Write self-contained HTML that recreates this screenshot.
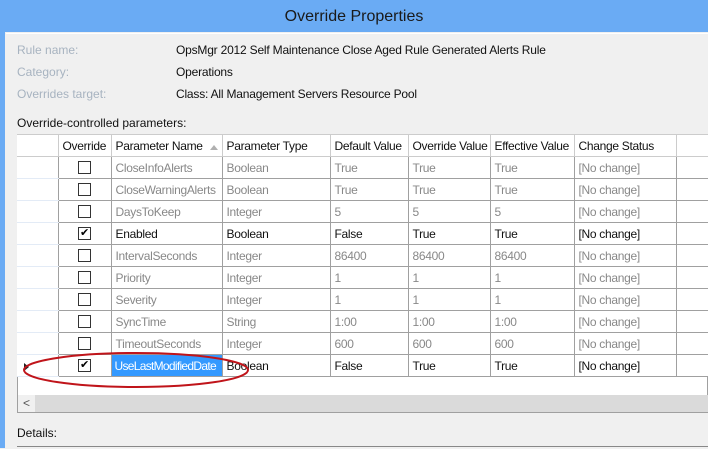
<!DOCTYPE html>
<html><head><style>
body{margin:0;width:708px;height:448px;overflow:hidden;background:#f0f0f0;font-family:"Liberation Sans",sans-serif;font-size:12px;position:relative}
.a{position:absolute}
.title{left:0;top:0;width:708px;height:32px;background:#6aabf4;color:#1a1a1a;font-size:16px;text-align:center;line-height:34px}
.lb{left:0;top:32px;width:5px;height:416px;background:#6aabf4}
.lab{color:#a7b3c0;left:17px}
.val{left:176px;color:#111;letter-spacing:-0.2px}
table{position:absolute;left:17px;top:134px;width:691px;border-collapse:collapse;table-layout:fixed;background:#fff}
td{height:21px;border:1px solid #a0a0a0;padding:0 0 0 4px;white-space:nowrap;overflow:hidden;color:#888;font-size:12px;letter-spacing:-0.3px}
tr.h td{background:#fff;color:#111;border-color:#ccc}
td.rh{border-right:1px solid #a0a0a0;border-top:1px solid #e3ebf6;border-bottom:1px solid #e3ebf6;border-left:none}
tr.k td{color:#111}
.cb{width:11px;height:11px;border:1px solid #333;margin:0 auto;background:#fff;position:relative;font-size:11px;line-height:11px;text-align:center;color:#000}
td.c{padding:0}
.sel{background:#3399ff;color:#fff!important;letter-spacing:-0.7px!important;padding-left:3px}
</style></head><body>
<div class="a title">Override Properties</div>
<div class="a lb"></div>
<div class="a" style="left:6px;top:33px;width:702px;height:1px;background:#fff"></div>
<div class="a lab" style="top:43px">Rule name:</div><div class="a val" style="top:43px">OpsMgr 2012 Self Maintenance Close Aged Rule Generated Alerts Rule</div>
<div class="a lab" style="top:65px">Category:</div><div class="a val" style="top:65px">Operations</div>
<div class="a lab" style="top:87px">Overrides target:</div><div class="a val" style="top:87px">Class: All Management Servers Resource Pool</div>
<div class="a" style="left:17px;top:116px;color:#111">Override-controlled parameters:</div>
<div class="a" style="left:17px;top:134px;width:691px;height:279px;background:#fff;border:1px solid #a0a0a0;box-sizing:border-box"></div>
<table>
<colgroup><col style="width:41px"><col style="width:53px"><col style="width:111px"><col style="width:108px"><col style="width:78px"><col style="width:82px"><col style="width:84px"><col style="width:102px"><col style="width:32px"></colgroup>
<tr class="h"><td class="rh"></td><td>Override</td><td>Parameter Name</td><td>Parameter Type</td><td>Default Value</td><td>Override Value</td><td>Effective Value</td><td>Change Status</td><td></td></tr>
<tr><td class="rh"></td><td class="c"><div class="cb"></div></td><td>CloseInfoAlerts</td><td>Boolean</td><td>True</td><td>True</td><td>True</td><td>[No change]</td><td></td></tr>
<tr><td class="rh"></td><td class="c"><div class="cb"></div></td><td>CloseWarningAlerts</td><td>Boolean</td><td>True</td><td>True</td><td>True</td><td>[No change]</td><td></td></tr>
<tr><td class="rh"></td><td class="c"><div class="cb"></div></td><td>DaysToKeep</td><td>Integer</td><td>5</td><td>5</td><td>5</td><td>[No change]</td><td></td></tr>
<tr class="k"><td class="rh"></td><td class="c"><div class="cb">✔</div></td><td>Enabled</td><td>Boolean</td><td>False</td><td>True</td><td>True</td><td>[No change]</td><td></td></tr>
<tr><td class="rh"></td><td class="c"><div class="cb"></div></td><td>IntervalSeconds</td><td>Integer</td><td>86400</td><td>86400</td><td>86400</td><td>[No change]</td><td></td></tr>
<tr><td class="rh"></td><td class="c"><div class="cb"></div></td><td>Priority</td><td>Integer</td><td>1</td><td>1</td><td>1</td><td>[No change]</td><td></td></tr>
<tr><td class="rh"></td><td class="c"><div class="cb"></div></td><td>Severity</td><td>Integer</td><td>1</td><td>1</td><td>1</td><td>[No change]</td><td></td></tr>
<tr><td class="rh"></td><td class="c"><div class="cb"></div></td><td>SyncTime</td><td>String</td><td>1:00</td><td>1:00</td><td>1:00</td><td>[No change]</td><td></td></tr>
<tr><td class="rh"></td><td class="c"><div class="cb"></div></td><td>TimeoutSeconds</td><td>Integer</td><td>600</td><td>600</td><td>600</td><td>[No change]</td><td></td></tr>
<tr class="k"><td class="rh"></td><td class="c"><div class="cb">✔</div></td><td class="sel">UseLastModifiedDate</td><td>Boolean</td><td>False</td><td>True</td><td>True</td><td>[No change]</td><td></td></tr>
</table>
<div class="a" style="left:18px;top:395px;width:690px;height:17px;background:#dadada"></div>
<div class="a" style="left:18px;top:395px;width:17px;height:17px;background:#f0f0f0;text-align:center;line-height:17px;color:#555;font-size:12px">&lt;</div>
<svg class="a" style="left:0;top:0" width="708" height="448">
<polygon points="210,150 214,145 218,150" fill="#b0b0b0"/>
<polygon points="24,363 29,367 24,371" fill="#222"/>
<ellipse cx="136" cy="370" rx="112" ry="17" fill="none" stroke="#c0141a" stroke-width="2"/>
</svg>
<div class="a" style="left:17px;top:426px;color:#111">Details:</div>
<div class="a" style="left:17px;top:446px;width:691px;height:2px;border-top:1px solid #888"></div>
</body></html>
